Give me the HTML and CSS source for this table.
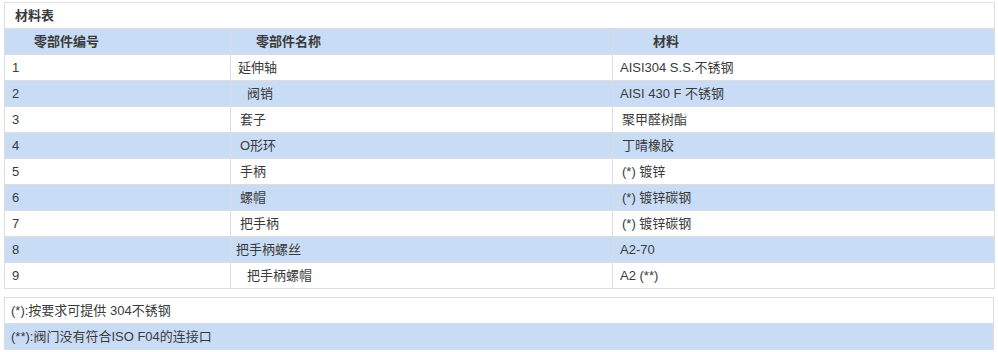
FILE: index.html
```html
<!DOCTYPE html>
<html lang="zh-CN">
<head>
<meta charset="utf-8">
<title>材料表</title>
<link rel="stylesheet" href="styles.css">
</head>
<body>
<table class="tbl materials">
  <colgroup>
    <col class="c1"><col class="c2"><col class="c3">
  </colgroup>
  <tr class="title-row"><td colspan="3" class="title">材料表</td></tr>
  <tr class="blue head">
    <th class="h1">零部件编号</th>
    <th class="h2">零部件名称</th>
    <th class="h3">材料</th>
  </tr>
  <tr><td>1</td><td>延伸轴</td><td>AISI304 S.S.不锈钢</td></tr>
  <tr class="blue"><td>2</td><td class="ind2">阀销</td><td>AISI 430 F 不锈钢</td></tr>
  <tr><td>3</td><td class="ind1">套子</td><td class="ind1">聚甲醛树酯</td></tr>
  <tr class="blue"><td>4</td><td class="ind1">O形环</td><td class="ind1">丁晴橡胶</td></tr>
  <tr><td>5</td><td class="ind1">手柄</td><td class="ind1">(*) 镀锌</td></tr>
  <tr class="blue"><td>6</td><td class="ind1">螺帽</td><td class="ind1">(*) 镀锌碳钢</td></tr>
  <tr><td>7</td><td class="ind1">把手柄</td><td class="ind1">(*) 镀锌碳钢</td></tr>
  <tr class="blue"><td>8</td><td class="ind0">把手柄螺丝</td><td>A2-70</td></tr>
  <tr><td>9</td><td class="ind2">把手柄螺帽</td><td>A2 (**)</td></tr>
</table>
<table class="tbl notes">
  <tr><td>(*):按要求可提供 304不锈钢</td></tr>
  <tr class="blue"><td>(**):阀门没有符合ISO F04的连接口</td></tr>
</table>
</body>
</html>
```
FILE: styles.css
```css
html, body {
  background: #ffffff;
}
body {
  margin: 2px 0 0 4px;
  font-family: "Liberation Sans", "Noto Sans CJK SC", sans-serif;
  font-size: 13px;
  color: #3a3a3a;
}
.tbl {
  width: 990px;
  border-collapse: collapse;
  table-layout: fixed;
  border: 1px solid #dddddd;
}
.tbl td, .tbl th {
  height: 26px;
  padding: 0 7px;
  line-height: 16px;
  border: 1px solid #dddddd;
  text-align: left;
  vertical-align: middle;
  box-sizing: border-box;
}
.c1 { width: 226px; }
.c2 { width: 382px; }
.c3 { width: 382px; }
.blue td, .blue th {
  background: #c9dcf6;
}
.title {
  font-weight: bold;
  padding-left: 10px !important;
}
.head th {
  font-weight: bold;
}
.h1 { padding-left: 29px !important; }
.h2 { padding-left: 25px !important; }
.h3 { padding-left: 40px !important; }
.ind0 { padding-left: 5px !important; }
.ind1 { padding-left: 9px !important; }
.ind2 { padding-left: 16px !important; }
.notes {
  margin-top: 8px;
}
.notes td {
  padding-left: 6px;
}
```
